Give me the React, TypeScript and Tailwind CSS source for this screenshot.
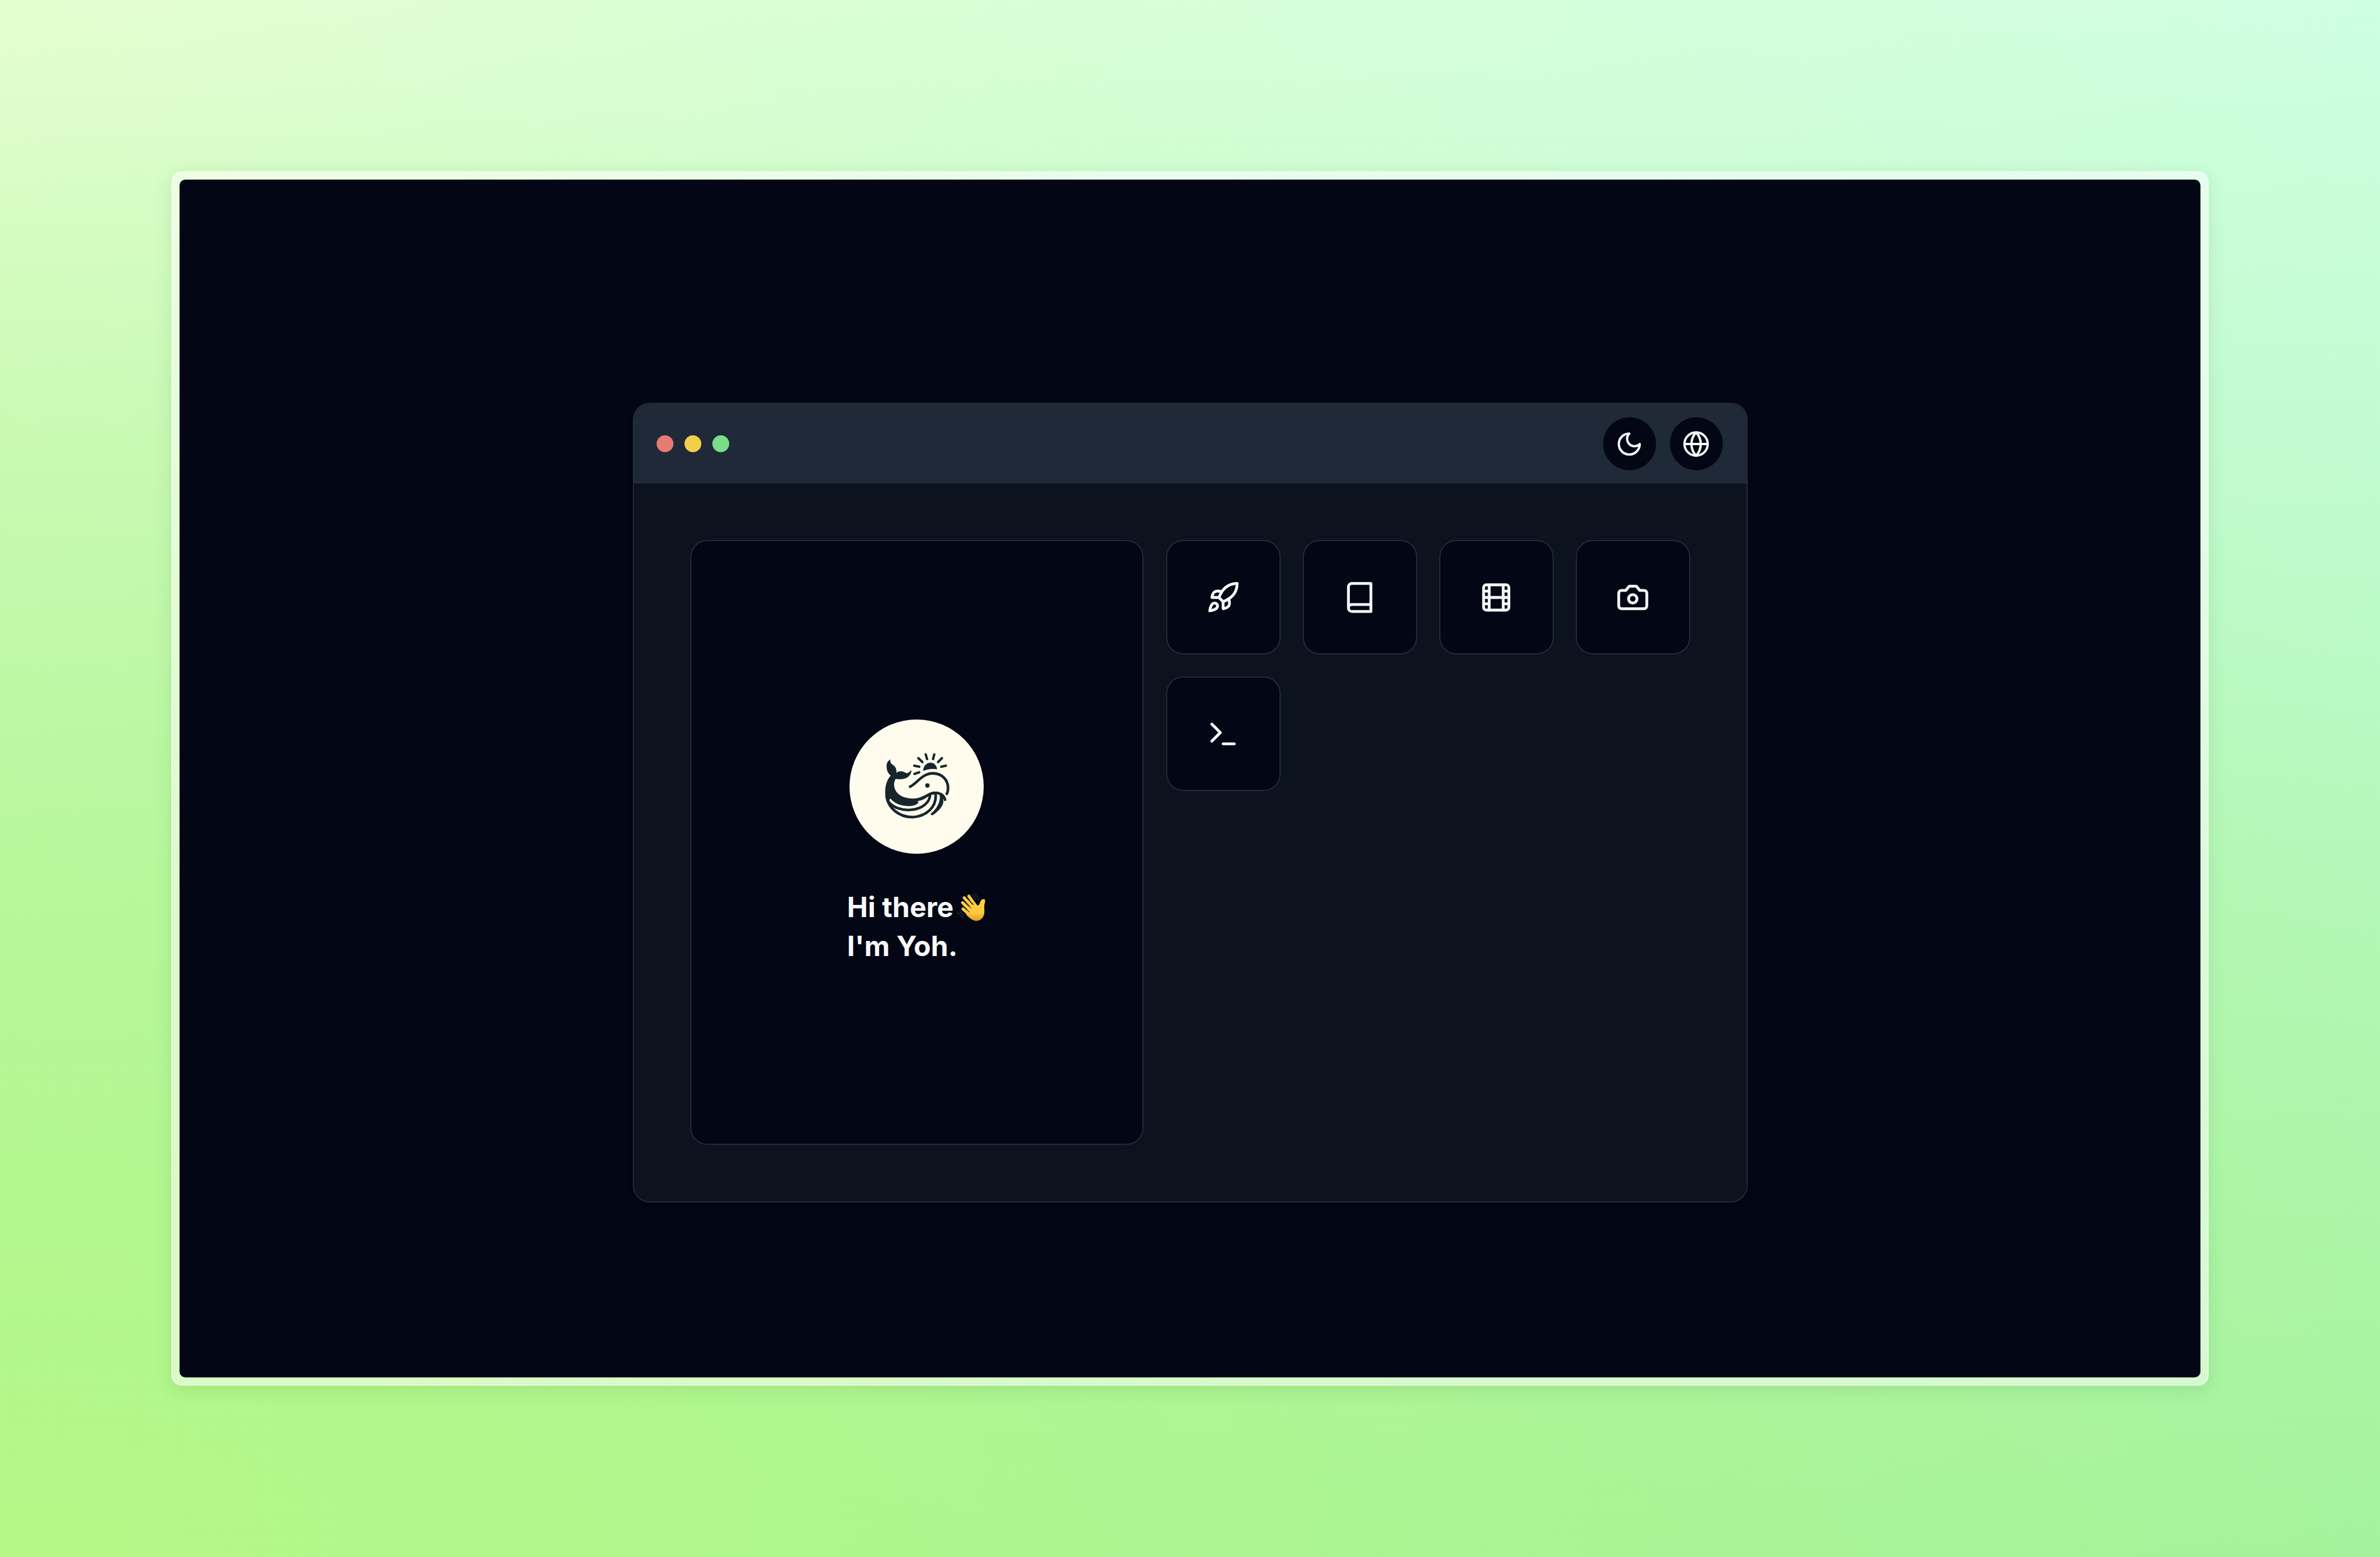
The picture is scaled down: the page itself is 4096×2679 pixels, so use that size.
import type { ReactNode } from "react";
import { Rocket } from "lucide-react";

type IconProps = { className: string; children: ReactNode };

function Icon({ className, children }: IconProps) {
  return (
    <svg
      viewBox="0 0 24 24"
      fill="none"
      stroke="currentColor"
      strokeWidth="2"
      strokeLinecap="round"
      strokeLinejoin="round"
      aria-hidden="true"
      className={className}
    >
      {children}
    </svg>
  );
}

const apps = [
  { name: "Projects", icon: <Rocket className="size-[58px]" strokeWidth={2} /> },
  {
    name: "Blog",
    icon: (
      <Icon className="size-[58px]">
        <path d="M4 19.5v-15A2.5 2.5 0 0 1 6.5 2H20v20H6.5a2.5 2.5 0 0 1 0-5H20" />
      </Icon>
    ),
  },
  {
    name: "Films",
    icon: (
      <Icon className="size-[58px]">
        <rect width="18" height="18" x="3" y="3" rx="2" />
        <path d="M7 3v18M3 7.5h4M3 12h18M3 16.5h4M17 3v18M17 7.5h4M17 16.5h4" />
      </Icon>
    ),
  },
  {
    name: "Photos",
    icon: (
      <Icon className="size-[58px]">
        <path d="M14.5 4h-5L7 7H4a2 2 0 0 0-2 2v9a2 2 0 0 0 2 2h16a2 2 0 0 0 2-2V9a2 2 0 0 0-2-2h-3l-2.5-3z" />
        <circle cx="12" cy="13" r="3" />
      </Icon>
    ),
  },
  {
    name: "Terminal",
    icon: (
      <Icon className="size-[58px]">
        <path d="m4 17 6-6-6-6M12 19h8" />
      </Icon>
    ),
  },
];

function WhaleLogo() {
  return (
    <svg viewBox="107 111 858 858" role="img" aria-label="Whale logo" className="size-[231px] rounded-full bg-[#fffcee]">
      <g fill="#16262c">
        <path d="M370 365C352 374 342 392 344 414C345 440 355 457 370 469C347 495 335 530 335 575C335 602 340 628 350 648L368 615C395 650 440 664 490 664C520 663 538 655 548 640L543 632C575 628 592 616 606 604L630 592L660 590L660 572C620 568 590 602 545 612C500 622 445 612 416 584C388 555 386 515 402 491C450 498 485 485 497 458C502 448 506 438 499 436C490 450 480 456 465 452C445 437 418 440 407 453C409 430 402 412 385 402C372 392 363 382 370 365Z" />
        <path d="M578 440C578 408 600 387 625 387C647 387 665 405 667 429C635 424 605 428 578 440Z" />
        <circle cx="605" cy="533" r="14" />
        <path d="M682 590C690 615 680 650 658 680C645 697 634 706 627 712C624 722 634 726 643 720C672 700 696 675 705 650C700 644 712 646 706 630L704 600Z" />
      </g>
      <g fill="none" stroke="#16262c" strokeWidth="17" strokeLinecap="round">
        <path d="M494 540C535 524 570 455 640 455C698 455 738 498 737 550C737 568 733 578 729 586" />
        <path d="M600 600C630 578 645 580 660 580C692 581 712 600 718 624" />
        <path d="M350 628C384 678 450 694 505 688C575 680 620 640 622 592" />
        <path d="M344 600C355 680 425 735 510 735C600 730 662 670 658 594" />
      </g>
      <path
        d="M522 459L553 448M521 406L553 413M547 358L573 383M594 334L603 364M649 334L641 364M698 358L673 383M723 406L693 413"
        stroke="#16262c"
        strokeWidth="15"
        strokeLinecap="round"
      />
    </svg>
  );
}

function WavingHand() {
  return (
    <svg viewBox="796 138 186 186" role="img" aria-label="waving hand" className="size-[50px]">
      <defs>
        <linearGradient id="hand" x1="0" y1="0" x2="0" y2="1">
          <stop offset="0" stopColor="#ffd348" />
          <stop offset="0.65" stopColor="#fbc83d" />
          <stop offset="1" stopColor="#e59a1f" />
        </linearGradient>
      </defs>
      <g stroke="#fdcd45" strokeWidth="19" strokeLinecap="round">
        <path d="M872 160L925 235M842 170L905 240M831 202L895 262M834 242L885 288" />
      </g>
      <path
        d="M885 215L918 214C930 224 938 218 942 206C946 188 955 177 968 179C980 182 977 196 972 212C968 228 973 245 971 268C966 300 945 318 918 318C895 316 880 302 858 282L850 262Z"
        fill="url(#hand)"
      />
      <path d="M856 172L901 213M841 194L887 237M836 224L875 262" stroke="#4a3510" strokeWidth="4" strokeLinecap="round" />
      <g fill="none" stroke="#55575f" strokeWidth="3" strokeLinecap="round">
        <path d="M906 143Q926 156 934 184M897 154Q912 164 920 184M801 260Q812 286 837 294M814 252Q824 272 843 282" />
      </g>
    </svg>
  );
}

export default function App() {
  return (
    <main className="flex h-screen bg-[radial-gradient(130%_95%_at_0%_100%,#b5f887_0%,#b5f88700_100%),linear-gradient(182deg,#9df09f00_0%,#9df09f_100%),linear-gradient(90deg,#e8ffd2_0%,#daffd8_40%,#cfffe2_100%)] p-[295px] font-[Inter,sans-serif]">
      <div className="flex flex-1 rounded-[18px] border-2 border-white/60 bg-white/50 p-3 shadow-[0_8px_32px_rgba(60,120,60,0.14)]">
        <div className="flex flex-1 items-center justify-center rounded-[10px] bg-[#020615] pt-[83px]">
          <section className="w-[1919px] overflow-hidden rounded-[29px] border-2 border-[#222a3a] bg-[#0c121e] shadow-lg">
            <header className="flex h-[137px] items-center justify-between bg-[#202938] pr-[41px] pl-[39px]">
              <div className="flex gap-[19px]">
                <button aria-label="Close" className="size-[29px] rounded-full bg-[#e77a74]" />
                <button aria-label="Minimize" className="size-[29px] rounded-full bg-[#f3ce49]" />
                <button aria-label="Maximize" className="size-[29px] rounded-full bg-[#79dd8a]" />
              </div>
              <div className="flex gap-6 text-slate-50">
                <button aria-label="Toggle theme" className="flex size-[91px] items-center justify-center rounded-full bg-[#020615]">
                  <Icon className="size-12">
                    <path d="M12 3a6 6 0 0 0 9 9 9 9 0 1 1-9-9Z" />
                  </Icon>
                </button>
                <button aria-label="Change language" className="flex size-[91px] items-center justify-center rounded-full bg-[#020615]">
                  <Icon className="size-12">
                    <circle cx="12" cy="12" r="10" />
                    <path d="M12 2a14.5 14.5 0 0 0 0 20 14.5 14.5 0 0 0 0-20M2 12h20" />
                  </Icon>
                </button>
              </div>
            </header>
            <div className="flex gap-[39px] p-[97px]">
              <article className="flex h-[1041px] flex-1 flex-col items-center justify-center gap-[58px] rounded-[29px] border-2 border-[#222a3a] bg-[#020615]">
                <WhaleLogo />
                <h1 className="text-[48px] leading-[67px] font-bold text-slate-50">
                  <span className="flex items-center gap-[6px]">
                    Hi there <WavingHand />
                  </span>
                  I'm Yoh.
                </h1>
              </article>
              <nav aria-label="Apps" className="grid grid-cols-4 content-start gap-[38px] text-slate-50">
                {apps.map((app) => (
                  <a
                    key={app.name}
                    href={"#" + app.name.toLowerCase()}
                    aria-label={app.name}
                    className="flex size-[197px] items-center justify-center rounded-[29px] border-2 border-[#222a3a] bg-[#020615]"
                  >
                    {app.icon}
                  </a>
                ))}
              </nav>
            </div>
          </section>
        </div>
      </div>
    </main>
  );
}
